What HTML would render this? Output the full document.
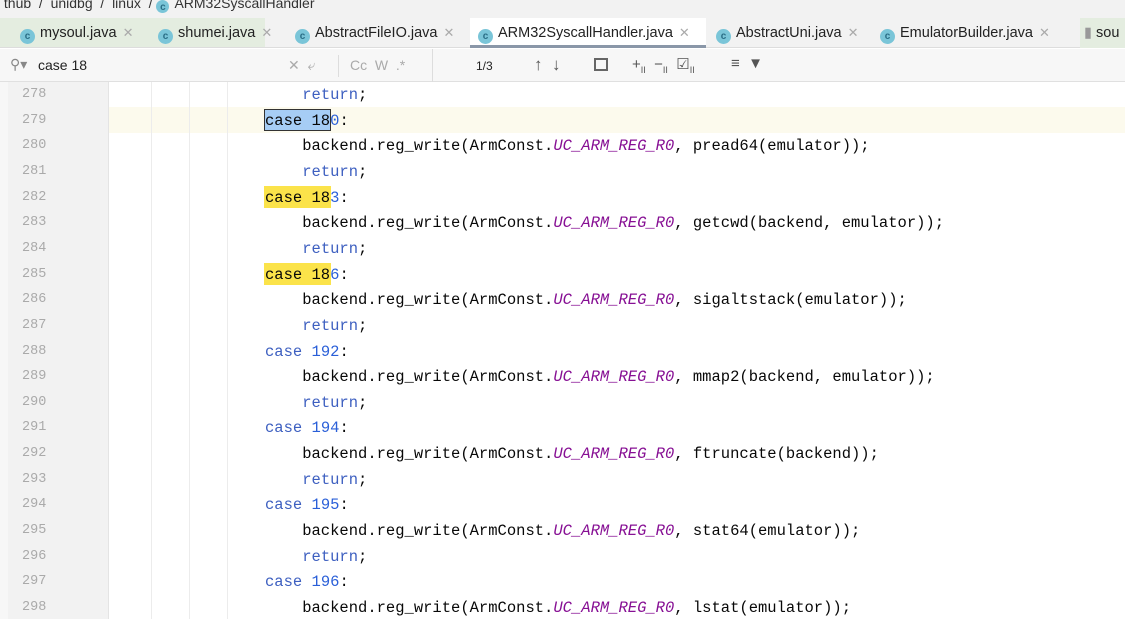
<!DOCTYPE html>
<html><head><meta charset="utf-8"><style>
*{margin:0;padding:0;box-sizing:border-box}
body{width:1125px;height:619px;overflow:hidden;background:#fff;font-family:"Liberation Sans",sans-serif;position:relative}
.crumb{position:absolute;left:0;top:0;width:1125px;height:18px;background:#f2f2f2;font-size:14px;color:#333;line-height:6px;overflow:hidden}
.tabs{position:absolute;left:0;top:18px;width:1125px;height:30px;background:#f2f2f2;border-bottom:1px solid #ddd}
.tab{position:absolute;top:0;height:30px;font-size:14.5px;color:#222;line-height:30px;white-space:nowrap}
.tab .x{color:#aaa;font-size:13px;margin-left:6px}
.ic{display:inline-block;width:15px;height:15px;border-radius:50%;background:#7ac5d8;color:#2a6e86;font-size:10px;line-height:15px;text-align:center;vertical-align:-2px;margin-right:5px;font-weight:bold}
.search{position:absolute;left:0;top:49px;width:1125px;height:33px;background:#f7f7f7;border-bottom:1px solid #e0e0e0;font-size:14px;color:#222}
.gut{position:absolute;left:8px;top:82px;width:101px;height:537px;background:#f2f2f2;border-right:1px solid #e4e4e4}
.ln{position:absolute;left:22px;width:40px;font-family:"Liberation Mono",monospace;font-size:13.5px;color:#aaa}
.code{position:absolute;left:265px;font-family:"Liberation Mono",monospace;font-size:15.5px;color:#080808;white-space:pre}
.k{color:#3d5fc0}.n{color:#2a5fd8}.c{color:#871094;font-style:italic}
.guide{position:absolute;top:82px;width:1px;height:537px;background:#ececec}
</style></head><body>
<div class="crumb">&nbsp;thub &nbsp;/ &nbsp;unidbg &nbsp;/ &nbsp;linux &nbsp;/ <span class="ic" style="width:13px;height:13px">c</span>ARM32SyscallHandler</div>
<div style="position:absolute;left:0;top:18px;width:1125px;height:30px;background:#f2f2f2"></div>
<div style="position:absolute;left:0;top:18px;width:265px;height:30px;background:#e4ede0"></div>
<div class="tabs" style="background:transparent">
<div class="tab" style="left:20px"><span class="ic">c</span>mysoul.java<span class="x">✕</span></div>
<div class="tab" style="left:158px"><span class="ic">c</span>shumei.java<span class="x">✕</span></div>
<div class="tab" style="left:295px"><span class="ic">c</span>AbstractFileIO.java<span class="x">✕</span></div>
<div class="tab" style="left:470px;width:236px;border-bottom:3px solid #8a97a8;background:#fff;padding-left:8px"><span class="ic">c</span>ARM32SyscallHandler.java<span class="x">✕</span></div>
<div class="tab" style="left:716px"><span class="ic">c</span>AbstractUni.java<span class="x">✕</span></div>
<div class="tab" style="left:880px"><span class="ic">c</span>EmulatorBuilder.java<span class="x">✕</span></div>
<div class="tab" style="left:1080px;background:#e4ede0;padding-left:4px;width:45px"><span style="color:#999">▮</span> sou</div>
</div>
<div class="search">
<span style="position:absolute;left:10px;top:7px;color:#888">⚲▾</span>
<span style="position:absolute;left:38px;top:8px">case 18</span>
<span style="position:absolute;left:288px;top:8px;color:#aaa">✕ &nbsp;⤶</span>
<div style="position:absolute;left:338px;top:6px;width:1px;height:22px;background:#ddd"></div>
<span style="position:absolute;left:350px;top:8px;color:#aaa">Cc &nbsp;W &nbsp;.*</span>
<div style="position:absolute;left:432px;top:0;width:1px;height:33px;background:#ddd"></div>
<span style="position:absolute;left:476px;top:10px;font-size:12px">1/3</span>
<span style="position:absolute;left:534px;top:6px;font-size:17px;color:#555">↑ &nbsp;↓</span>
<span style="position:absolute;left:594px;top:9px;width:14px;height:13px;border:2px solid #666"></span>
<span style="position:absolute;left:632px;top:6px;font-size:15px;color:#555">+<sub style="font-size:9px">II</sub> &nbsp;−<sub style="font-size:9px">II</sub> &nbsp;☑<sub style="font-size:9px">II</sub></span>
<span style="position:absolute;left:731px;top:6px;font-size:15px;color:#555">≡ &nbsp;▼</span>
</div>
<div class="gut"></div>
<div style="position:absolute;left:0;top:82px;width:8px;height:537px;background:#f7f7f7"></div>
<div style="position:absolute;left:109px;top:107px;width:1016px;height:26px;background:#fcfaed"></div>
<div class="guide" style="left:151px"></div>
<div class="guide" style="left:189px"></div>
<div class="guide" style="left:227px"></div>
<div style="position:absolute;left:264px;top:109px;width:67px;height:22px;background:#a6cdf5;border:1px solid #333"></div>
<div style="position:absolute;left:264px;top:186px;width:67px;height:22px;background:#fbe34a"></div>
<div style="position:absolute;left:264px;top:263px;width:67px;height:22px;background:#fbe34a"></div>
<div id="lines"></div>
<script>
const L=[
['278','    <span class="k">return</span>;'],
['279','case 18<span class="n">0</span>:'],
['280','    backend.reg_write(ArmConst.<span class="c">UC_ARM_REG_R0</span>, pread64(emulator));'],
['281','    <span class="k">return</span>;'],
['282','case 18<span class="n">3</span>:'],
['283','    backend.reg_write(ArmConst.<span class="c">UC_ARM_REG_R0</span>, getcwd(backend, emulator));'],
['284','    <span class="k">return</span>;'],
['285','case 18<span class="n">6</span>:'],
['286','    backend.reg_write(ArmConst.<span class="c">UC_ARM_REG_R0</span>, sigaltstack(emulator));'],
['287','    <span class="k">return</span>;'],
['288','<span class="k">case</span> <span class="n">192</span>:'],
['289','    backend.reg_write(ArmConst.<span class="c">UC_ARM_REG_R0</span>, mmap2(backend, emulator));'],
['290','    <span class="k">return</span>;'],
['291','<span class="k">case</span> <span class="n">194</span>:'],
['292','    backend.reg_write(ArmConst.<span class="c">UC_ARM_REG_R0</span>, ftruncate(backend));'],
['293','    <span class="k">return</span>;'],
['294','<span class="k">case</span> <span class="n">195</span>:'],
['295','    backend.reg_write(ArmConst.<span class="c">UC_ARM_REG_R0</span>, stat64(emulator));'],
['296','    <span class="k">return</span>;'],
['297','<span class="k">case</span> <span class="n">196</span>:'],
['298','    backend.reg_write(ArmConst.<span class="c">UC_ARM_REG_R0</span>, lstat(emulator));']];
let h='';
L.forEach((l,i)=>{const y=86+i*25.65;
h+=`<div class="ln" style="top:${y+1}px">${l[0]}</div><div class="code" style="top:${y}px">${l[1]}</div>`;});
document.getElementById('lines').innerHTML=h;
</script>
</body></html>
